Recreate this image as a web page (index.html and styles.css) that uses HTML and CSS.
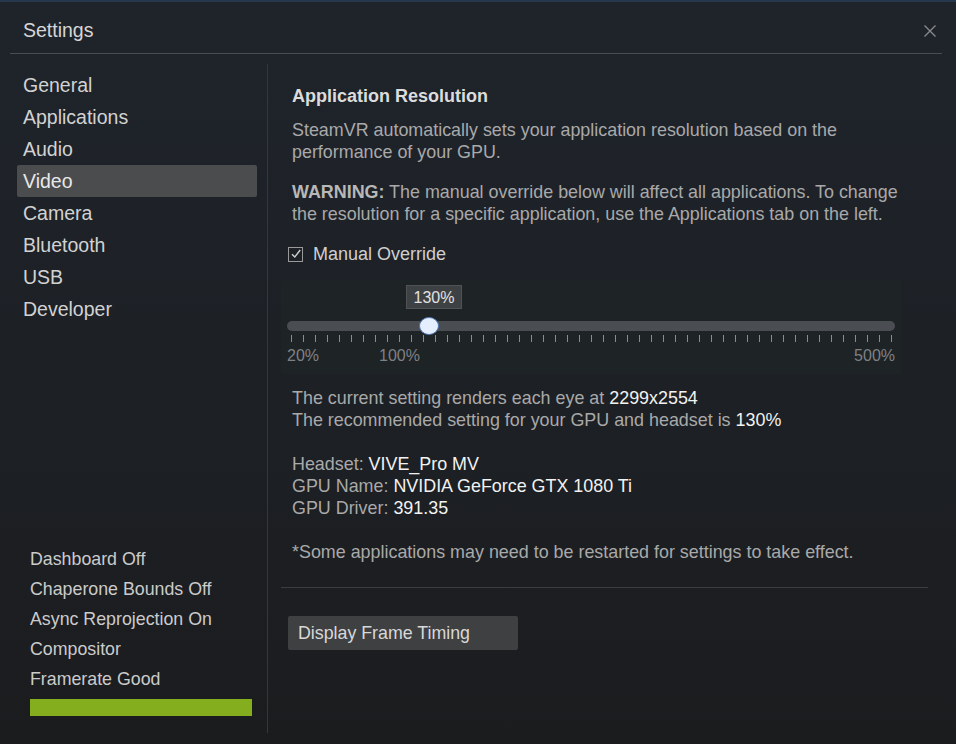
FILE: index.html
```html
<!DOCTYPE html>
<html>
<head>
<meta charset="utf-8">
<link rel="stylesheet" href="styles.css">
</head>
<body>
<div class="window">
  <div class="header">
    <div class="title">Settings</div>
    <svg class="close" width="14" height="14" viewBox="0 0 14 14"><path d="M1.5 1.5 L12.5 12.5 M12.5 1.5 L1.5 12.5" stroke="#8a8c8f" stroke-width="1.3" fill="none"/></svg>
  </div>
  <div class="main">
    <div class="sidebar">
      <ul class="nav">
        <li class="nav-item">General</li>
        <li class="nav-item">Applications</li>
        <li class="nav-item">Audio</li>
        <li class="nav-item active">Video</li>
        <li class="nav-item">Camera</li>
        <li class="nav-item">Bluetooth</li>
        <li class="nav-item">USB</li>
        <li class="nav-item">Developer</li>
      </ul>
      <ul class="status">
        <li>Dashboard Off</li>
        <li>Chaperone Bounds Off</li>
        <li>Async Reprojection On</li>
        <li>Compositor</li>
        <li>Framerate Good</li>
      </ul>
      <div class="framebar"></div>
    </div>
    <div class="content">
      <h2 class="heading">Application Resolution</h2>
      <p class="para">SteamVR automatically sets your application resolution based on the performance of your GPU.</p>
      <p class="para warn"><b>WARNING:</b> The manual override below will affect all applications. To change the resolution for a specific application, use the Applications tab on the left.</p>
      <div class="check-row">
        <span class="checkbox"><svg width="12" height="12" viewBox="0 0 12 12"><path d="M2 6.2 L4.8 9 L10.2 2" stroke="#d0d0d0" stroke-width="1.4" fill="none"/></svg></span>
        <span class="check-label">Manual Override</span>
      </div>
      <div class="slider-panel">
        <div class="tip-row"><span class="tip">130%</span></div>
        <div class="track">
          <div class="thumb"></div>
        </div>
        <div class="ticks"></div>
        <div class="labels">
          <span class="lbl">20%</span>
          <span class="lbl l100">100%</span>
          <span class="lbl l500">500%</span>
        </div>
      </div>
      <div class="info">
        <div>The current setting renders each eye at <span class="val">2299x2554</span></div>
        <div>The recommended setting for your GPU and headset is <span class="val">130%</span></div>
      </div>
      <div class="info">
        <div>Headset: <span class="val">VIVE_Pro MV</span></div>
        <div>GPU Name: <span class="val">NVIDIA GeForce GTX 1080 Ti</span></div>
        <div>GPU Driver: <span class="val">391.35</span></div>
      </div>
      <div class="info">
        <div>*Some applications may need to be restarted for settings to take effect.</div>
      </div>
      <hr class="sep">
      <div class="btn">Display Frame Timing</div>
    </div>
  </div>
</div>
</body>
</html>
```

FILE: styles.css
```css
html, body {
  margin: 0;
  padding: 0;
}
body {
  width: 956px;
  height: 744px;
  overflow: hidden;
  font-family: "Liberation Sans", Arial, sans-serif;
  background: linear-gradient(to bottom, #1f242b 0%, #1d2126 45%, #1b1c1e 100%);
  color: #b4b4b4;
}
.window {
  height: 744px;
  border-top: 2px solid #25384c;
  box-sizing: border-box;
  display: flex;
  flex-direction: column;
}
.header {
  display: flex;
  align-items: center;
  justify-content: space-between;
  height: 52px;
  margin: 0 14px 0 10px;
  padding: 0 5px 0 13px;
  border-bottom: 1px solid #4a4d51;
  box-sizing: border-box;
}
.title {
  font-size: 19.5px;
  color: #d6d6d6;
  padding-top: 6px;
}
.close {
  margin-top: 6px;
}
.main {
  display: flex;
  margin-top: 10px;
  height: 669px;
}
.sidebar {
  width: 268px;
  border-right: 1px solid #34373b;
  display: flex;
  flex-direction: column;
  box-sizing: border-box;
  padding: 5px 0 17px 17px;
}
.nav {
  list-style: none;
  margin: 0;
  padding: 0;
}
.nav-item {
  width: 240px;
  height: 32px;
  line-height: 32px;
  padding-left: 6px;
  box-sizing: border-box;
  font-size: 19.5px;
  color: #d2d2d2;
  border-radius: 2px;
}
.nav-item.active {
  background: #4b4c4e;
  color: #e8e8e8;
}
.status {
  list-style: none;
  margin: auto 0 0 0;
  padding: 0 0 0 13px;
}
.status li {
  height: 30px;
  line-height: 30px;
  font-size: 17.8px;
  color: #cbcbcb;
}
.framebar {
  margin: 5px 0 0 13px;
  width: 222px;
  height: 17px;
  background: #84ae1e;
}
.content {
  flex: 1;
  padding: 21px 0 0 24px;
}
.heading {
  margin: 0;
  font-size: 18px;
  line-height: 22px;
  font-weight: bold;
  color: #dcdcdc;
}
.para {
  margin: 12px 0 0 0;
  width: 625px;
  font-size: 17.9px;
  line-height: 22px;
  color: #a9a9a9;
}
.warn {
  margin-top: 18px;
}
.warn b {
  color: #b8b8b8;
}
.check-row {
  display: flex;
  align-items: center;
  margin-top: 18px;
  height: 22px;
  margin-left: -4px;
}
.checkbox {
  width: 15px;
  height: 15px;
  border: 1px solid #9a9a9a;
  box-sizing: border-box;
  display: flex;
  align-items: center;
  justify-content: center;
}
.check-label {
  margin-left: 10px;
  font-size: 18px;
  color: #cfcfcf;
}
.slider-panel {
  margin: 15px 0 0 -11px;
  width: 620px;
  height: 94px;
  padding: 5px 6px 0 6px;
  box-sizing: border-box;
  background: #1e2326;
}
.tip-row {
  display: flex;
  height: 24px;
  padding-left: 119px;
}
.tip {
  width: 56px;
  height: 24px;
  line-height: 24px;
  text-align: center;
  background: #3e4144;
  border: 1px solid #4f5356;
  box-sizing: border-box;
  font-size: 16px;
  color: #e2e2e2;
}
.track {
  margin-top: 12px;
  height: 10px;
  border-radius: 5px;
  background: #4a4e52;
  position: relative;
}
.thumb {
  position: absolute;
  left: 132px;
  top: -4px;
  width: 20px;
  height: 18px;
  border-radius: 50%;
  background: #e5eeff;
  border: 1.5px solid #4f74ad;
  box-sizing: border-box;
}
.ticks {
  margin: 4px 0 0 4px;
  width: 602px;
  height: 7px;
  background: repeating-linear-gradient(to right, #8a8c8e 0 1px, transparent 1px 12px);
}
.labels {
  display: flex;
  margin-top: 6px;
  font-size: 16px;
  color: #7e8184;
  line-height: 16px;
}
.lbl {
  display: block;
}
.l100 {
  margin-left: 60px;
}
.l500 {
  margin-left: auto;
}
.info {
  margin-top: 13px;
  font-size: 17.9px;
  line-height: 22px;
  color: #a9a9a9;
}
.info + .info {
  margin-top: 22px;
}
.val {
  color: #f2f2f2;
}
.sep {
  margin: 24px 28px 0 -11px;
  border: 0;
  border-top: 1px solid #3b3d40;
  height: 0;
}
.btn {
  margin: 28px 0 0 -4px;
  width: 230px;
  height: 34px;
  line-height: 34px;
  padding-left: 10px;
  box-sizing: border-box;
  background: #3f4042;
  border-radius: 2px;
  font-size: 17.8px;
  color: #d8d8d8;
}
```
